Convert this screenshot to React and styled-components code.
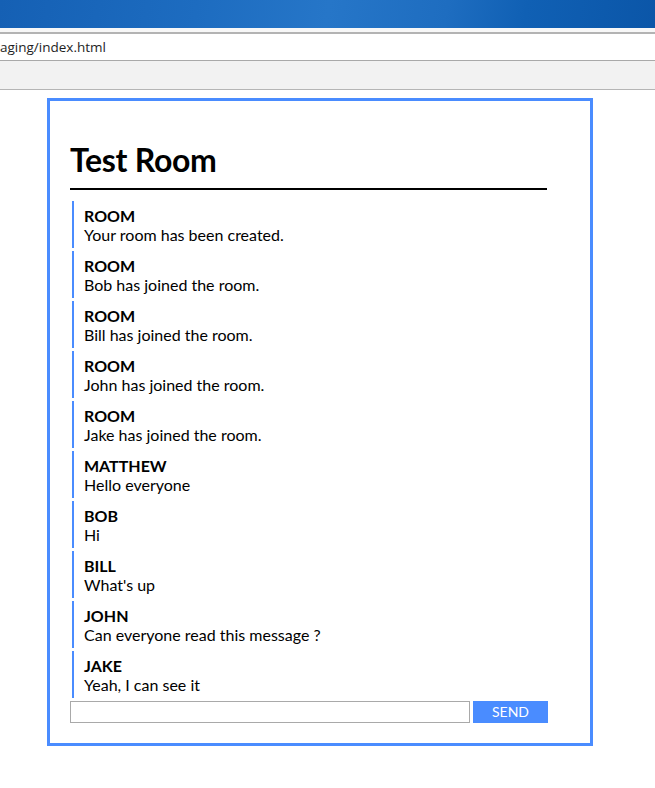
import React from "react";
import styled, { createGlobalStyle } from "styled-components";

const Global = createGlobalStyle`
  html, body { margin: 0; padding: 0; background: #ffffff; }
  body { font-family: "Lato", "Liberation Sans", sans-serif; color: #000; }
`;

const TitleBar = styled.div`
  height: 28px;
  background: linear-gradient(100deg, #1560b4 0%, #1d6cc0 30%, #2676c8 50%, #1e6dc0 68%, #1060b4 80%, #0b56a8 100%);
`;

const TitleGap = styled.div`
  height: 4px;
  background: #f7f7f7;
  border-bottom: 2px solid #b3b3b3;
`;

const AddressBar = styled.div`
  height: 26px;
  background: #ffffff;
  border-bottom: 1px solid #a9a9a9;
  display: flex;
  align-items: center;
  font-family: "Open Sans", "Noto Sans", sans-serif;
  font-size: 13.5px;
  color: #1e1e1e;
  white-space: nowrap;
  overflow: hidden;
`;

const Toolbar = styled.div`
  height: 28px;
  background: #f2f2f2;
  border-bottom: 1px solid #b5b5b5;
`;

const Page = styled.div`
  padding: 8px 0 8px 47px;
`;

const Room = styled.div`
  width: 540px;
  height: 642px;
  border: 3px solid #4a8cff;
  box-sizing: content-box;
  display: flex;
  flex-direction: column;
`;

const Content = styled.div`
  width: 478px;
  margin-left: 20px;
  padding-top: 40px;
`;

const Heading = styled.h1`
  margin: 0;
  font-family: "Lato", sans-serif;
  font-weight: 700;
  font-size: 32px;
  line-height: 38px;
  letter-spacing: -0.3px;
  padding-bottom: 9px;
  border-bottom: 2px solid #000;
  width: 477px;
`;

const Messages = styled.ul`
  list-style: none;
  margin: 11px 0 0 0;
  padding: 0;
`;

const Message = styled.li`
  margin: 0 0 3px 2px;
  padding: 5px 0 3px 10px;
  border-left: 2px solid #4a8cff;
`;

const Sender = styled.div`
  font-weight: 700;
  font-size: 16px;
  line-height: 19px;
  text-transform: uppercase;
`;

const Body = styled.div`
  font-size: 16px;
  line-height: 20px;
`;

const Form = styled.form`
  display: flex;
  gap: 3px;
  margin: 0;
`;

const Input = styled.input`
  width: 400px;
  height: 22px;
  box-sizing: border-box;
  border: 1px solid #a9a9a9;
  margin: 0;
  padding: 0 4px;
  font-family: "Lato", sans-serif;
  font-size: 14px;
  outline: none;
`;

const SendButton = styled.button`
  width: 75px;
  height: 22px;
  border: none;
  margin: 0;
  padding: 0;
  background: #4a8cff;
  color: #ffffff;
  font-family: "Lato", sans-serif;
  font-size: 14px;
  line-height: 22px;
  cursor: pointer;
`;

const messages = [
  { from: "Room", text: "Your room has been created." },
  { from: "Room", text: "Bob has joined the room." },
  { from: "Room", text: "Bill has joined the room." },
  { from: "Room", text: "John has joined the room." },
  { from: "Room", text: "Jake has joined the room." },
  { from: "Matthew", text: "Hello everyone" },
  { from: "Bob", text: "Hi" },
  { from: "Bill", text: "What's up" },
  { from: "John", text: "Can everyone read this message ?" },
  { from: "Jake", text: "Yeah, I can see it" },
];

export default function App() {
  return (
    <>
      <Global />
      <TitleBar />
      <TitleGap />
      <AddressBar>aging/index.html</AddressBar>
      <Toolbar />
      <Page>
        <Room>
          <Content>
            <Heading>Test Room</Heading>
            <Messages>
              {messages.map((m, i) => (
                <Message key={i}>
                  <Sender>{m.from}</Sender>
                  <Body>{m.text}</Body>
                </Message>
              ))}
            </Messages>
            <Form onSubmit={(e) => e.preventDefault()}>
              <Input type="text" />
              <SendButton type="submit">SEND</SendButton>
            </Form>
          </Content>
        </Room>
      </Page>
    </>
  );
}
